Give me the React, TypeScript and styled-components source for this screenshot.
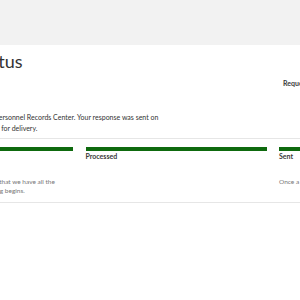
import React from 'react';
import styled, { createGlobalStyle } from 'styled-components';

const GlobalStyle = createGlobalStyle`
  html, body {
    margin: 0;
    padding: 0;
    background: #ffffff;
    overflow: hidden;
  }
  body {
    font-family: Lato, "Open Sans", Arial, sans-serif;
    color: #333333;
  }
`;

const TopBar = styled.header`
  height: 45px;
  background: #f2f2f2;
`;

const Main = styled.main`
  width: 720px;
  margin-left: -108px;
`;

const Intro = styled.section`
  display: grid;
  grid-template-columns: 391px 1fr;
`;

const Title = styled.h1`
  grid-column: 1 / -1;
  margin: 5px 0 0;
  padding-left: 13px;
  font-size: 18px;
  line-height: 22px;
  font-weight: 400;
  color: #333333;
`;

const Meta = styled.div`
  grid-column: 2;
  margin-top: 6px;
  font-size: 7px;
  line-height: 10px;
  font-weight: 700;
  color: #3a3a3a;
`;

const Message = styled.p`
  grid-column: 1;
  width: 272px;
  margin: 24px 0 4px;
  font-size: 7px;
  line-height: 11px;
  color: #333333;
`;

const Steps = styled.ol`
  list-style: none;
  margin: 0;
  padding: 8px 0 7px;
  display: grid;
  grid-template-columns: repeat(3, 181px);
  column-gap: 12.5px;
  border-top: 1px solid #e6e6e6;
  border-bottom: 1px solid #e6e6e6;
`;

const Step = styled.li`
  display: flex;
  flex-direction: column;
`;

const Bar = styled.div<{ $done: boolean }>`
  height: 4px;
  background: ${(p) => (p.$done ? '#0e6a0e' : '#d6d6d6')};
`;

const StepLabel = styled.div`
  font-size: 7px;
  line-height: 10px;
  font-weight: 700;
  color: #3a3a3a;
`;

const StepText = styled.div`
  margin-top: 17px;
  min-height: 17px;
  font-size: 6.5px;
  line-height: 8.5px;
  color: #777777;
`;

const steps = [
  {
    label: 'Received',
    text: 'Your request was received. We check that we have all the information we need before processing begins.',
  },
  {
    label: 'Processed',
    text: '',
  },
  {
    label: 'Sent',
    text: 'Once a response is mailed, delivery takes 7-10 days.',
  },
];

const App = () => {
  return (
    <>
      <GlobalStyle />
      <TopBar />
      <Main>
        <Intro>
          <Title>Request Status</Title>
          <Meta>Request Number</Meta>
          <Message>
            It was completed by the National Personnel Records Center. Your response was sent on
            11/18/2024. Please allow ten days for delivery.
          </Message>
        </Intro>
        <Steps>
          {steps.map((s) => (
            <Step key={s.label}>
              <Bar $done />
              <StepLabel>{s.label}</StepLabel>
              <StepText>{s.text}</StepText>
            </Step>
          ))}
        </Steps>
      </Main>
    </>
  );
};

export default App;
